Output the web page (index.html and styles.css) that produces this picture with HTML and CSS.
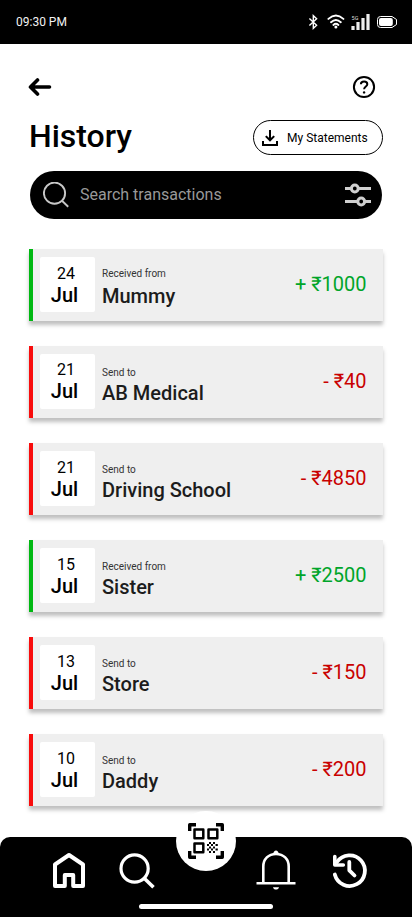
FILE: index.html
```
<!DOCTYPE html>
<html lang="en">
<head>
<meta charset="utf-8">
<meta name="viewport" content="width=device-width, initial-scale=1">
<title>History</title>
<link rel="stylesheet" href="styles.css">
</head>
<body>
<div class="screen">
  <div class="status">
    <span class="time">09:30 PM</span>
    <svg class="status-icons" width="92" height="20" viewBox="0 0 92 20" fill="none" stroke="#fff">
      <path d="M1.400 5.500 8.600 12.300 5.300 15.300V2.700L8.600 5.700 1.400 12.500" stroke-width="1.400"/>
      <path d="M20.400 5.900q7.500-6.800 15 0M23 9.200q4.900-4.600 9.800 0M25.400 11.900q2.500-2.100 5 0" stroke-width="1.900" stroke-linecap="round"/>
      <circle cx="27.900" cy="14" r="1.500" fill="#fff" stroke="none"/>
      <path d="M45 13V17M50 9V17M55 5V17M60 1V17" stroke="#eee" stroke-width="3.200"/>
      <text class="network" x="43.600" y="6.700">5G</text>
      <path d="M72.500 3.500h11.500l4.500 3v5l-4.500 3H72.500q-3 0-3-3v-5q0-3 3-3Z" stroke-width="1"/>
      <rect x="71" y="5" width="13.800" height="8" rx="2" fill="#fff" stroke="none"/>
    </svg>
  </div>
  <header class="toolbar">
    <svg width="24" height="20" viewBox="0 0 24 20" fill="none" stroke="#000" stroke-width="3.600" stroke-linecap="round" stroke-linejoin="round"><path d="M21.500 10H3M9.500 3 2.500 10l7 7"/></svg>
    <svg width="24" height="24" viewBox="0 0 24 24" fill="none" stroke="#000" stroke-width="2"><circle cx="12" cy="12" r="10.100"/><path d="M8.900 9.200c0-3.700 6.400-3.700 6.400 0 0 2.300-3.200 2.300-3.200 5.100"/><circle cx="12.100" cy="17.400" r="1.200" fill="#000" stroke="none"/></svg>
  </header>
  <div class="heading">
    <h1>History</h1>
    <button class="statements">
      <svg width="16" height="16" viewBox="0 0 16 16" fill="none" stroke="#000" stroke-width="2"><path d="M8 0v10M3.800 6.100 8 10.300l4.200-4.200M1 11v4h14v-4"/></svg>
      <span>My Statements</span>
    </button>
  </div>
  <div class="search">
    <svg width="26" height="26" viewBox="0 0 26 26" fill="none" stroke="#c8c8c8" stroke-width="1.900"><circle cx="11.500" cy="11.200" r="10.600"/><path d="m19 18.800 6.200 5.900"/></svg>
    <span class="placeholder">Search transactions</span>
    <svg width="26" height="24" viewBox="0 0 26 24" fill="none" stroke="#d0d0d0" stroke-width="3"><path d="M0 5.500h6M14 5.500h12M0 18.500h12M20 18.500h6"/><circle cx="9.800" cy="5.500" r="3.400"/><circle cx="16.200" cy="18.500" r="3.400"/></svg>
  </div>
  <main class="list">
    <article class="card received"><div class="date"><span>24</span><b>Jul</b></div><div class="party"><small>Received from</small><strong>Mummy</strong></div><span class="amount">+ ₹1000</span></article>
    <article class="card sent"><div class="date"><span>21</span><b>Jul</b></div><div class="party"><small>Send to</small><strong>AB Medical</strong></div><span class="amount">- ₹40</span></article>
    <article class="card sent"><div class="date"><span>21</span><b>Jul</b></div><div class="party"><small>Send to</small><strong>Driving School</strong></div><span class="amount">- ₹4850</span></article>
    <article class="card received"><div class="date"><span>15</span><b>Jul</b></div><div class="party"><small>Received from</small><strong>Sister</strong></div><span class="amount">+ ₹2500</span></article>
    <article class="card sent"><div class="date"><span>13</span><b>Jul</b></div><div class="party"><small>Send to</small><strong>Store</strong></div><span class="amount">- ₹150</span></article>
    <article class="card sent"><div class="date"><span>10</span><b>Jul</b></div><div class="party"><small>Send to</small><strong>Daddy</strong></div><span class="amount">- ₹200</span></article>
  </main>
  <nav class="nav">
    <svg width="40" height="40" viewBox="0 0 40 40" fill="none" stroke="#fff" stroke-width="4" stroke-linejoin="round"><path d="M6 14.500 20 5l14 9.500V36H24.200V25H15.800V36H6Z"/></svg>
    <svg width="40" height="40" viewBox="0 0 40 40" fill="none" stroke="#fff" stroke-width="3.200"><circle cx="17.600" cy="18.500" r="13.600"/><path d="m27.200 28.200 9.300 9.100" stroke-width="3.600"/></svg>
    <div class="scan">
      <svg width="36" height="36" viewBox="0 0 36 36" fill="none" stroke="#000" stroke-width="2.500" stroke-linejoin="round">
        <path d="M1.700 8V1.700H8M28 1.700h6.300V8M1.700 28v6.300H8M28 34.300h6.300V28" stroke-width="3.400"/>
        <rect x="6.500" y="6.500" width="8.800" height="8.800"/><rect x="20.500" y="6.500" width="8.800" height="8.800"/><rect x="6.500" y="20.500" width="8.800" height="8.800"/>
        <path d="M21 19h2v2h-2zM25 19h2v2h-2zM19 21h2v2h-2zM23 21h2v2h-2zM27.500 21h2.300v2h-2.300zM21 23.500h2v2h-2zM25 23.500h2v2h-2zM19 25.500h2v2h-2zM23 25.500h2v2h-2zM27.500 25.500h2.300v2h-2.300zM21 28h2v2h-2zM25 28h2v2h-2z" fill="#000" stroke="none"/>
      </svg>
    </div>
    <svg width="40" height="40" viewBox="0 0 40 40" fill="none" stroke="#fff" stroke-width="2.600"><path d="M.5 33.200h39M7.300 33V16.500C7.300 9 12.500 4 20 4s12.700 5 12.700 12.500V33"/><path d="M17.300 4c0-4.700 5.400-4.700 5.400 0ZM17 37.200h6c-.5 3.200-5.500 3.200-6 0Z" fill="#fff" stroke="none"/></svg>
    <svg width="40" height="40" viewBox="0 0 40 40" fill="none" stroke="#fff" stroke-width="3.800" stroke-linecap="round" stroke-linejoin="round"><path d="M4.800 24.500A15.300 15.300 0 1 0 7 12"/><path d="M4.800 6.500V15h8.500" stroke-width="3.600"/><path d="M19.300 12v8.300l5.200 5.200"/></svg>
    <i class="indicator"></i>
  </nav>
</div>
</body>
</html>
```
FILE: styles.css
```
* { box-sizing: border-box; }
body { margin: 0; background: #fff; color: #000; font-family: Roboto, sans-serif; }
.screen { width: 412px; height: 917px; display: flex; flex-direction: column; overflow: hidden; }
.screen svg { display: block; flex: none; }
.status { height: 44px; flex: none; background: #000; color: #f2f2f2; display: flex; align-items: center; justify-content: space-between; padding: 0 12px 0 16px; }
.time { font-size: 12px; line-height: 14px; }
.status-icons { margin-top: 2px; }
.network { font-size: 5.5px; fill: #ddd; stroke: none; }
.toolbar { height: 76px; padding: 11px 36px 1px 28px; display: flex; align-items: center; justify-content: space-between; flex: none; }
.heading { height: 35px; display: flex; align-items: center; justify-content: space-between; padding: 0 29px; flex: none; }
h1 { margin: -4px 0 0; font-size: 32px; line-height: 38px; font-weight: 500; }
.statements { width: 130px; height: 35px; border: 1px solid #000; border-radius: 18px; background: #fff; color: #000; padding: 0 0 0 8px; display: flex; align-items: center; gap: 9px; font: 400 12px/14px Roboto, sans-serif; white-space: nowrap; }
.search { height: 48px; margin: 16px 30px 0; border-radius: 24px; background: #000; display: flex; align-items: center; padding: 0 11px 0 13px; flex: none; }
.placeholder { flex: 1; margin: -2px 0 0 11px; font-size: 16px; line-height: 19px; color: #999; }
.list { display: flex; flex-direction: column; gap: 25px; margin: 30px 29px 0; flex: none; }
.card { height: 72px; background: #efefef; border-left: 4px solid; display: flex; align-items: center; padding: 0 16.5px 0 7px; box-shadow: 0 4px 4px rgba(0, 0, 0, .25); }
.received { border-color: #00b812; }
.sent { border-color: #f80c0c; }
.date { width: 55px; height: 55px; border-radius: 2px; background: #fff; display: flex; flex-direction: column; align-items: center; padding: 7px 0 0; margin-top: -1px; }
.date span { font-size: 16px; line-height: 19px; margin-right: 3px; }
.date b { font-size: 20px; line-height: 23px; font-weight: 500; margin: 1px 6px 0 0; }
.card:nth-child(2) .date { padding-top: 6px; }
.party { flex: 1; margin: 8px 0 0 7px; display: flex; flex-direction: column; color: #1c1c1c; }
.party small { font-size: 10px; line-height: 12px; color: #333; }
.party strong { font-size: 20px; line-height: 23px; font-weight: 500; margin-top: 3px; }
.card:nth-child(1) .party { margin-top: 6px; }
.card:nth-child(1) .party strong { margin-top: 5px; }
.amount { font-size: 20px; line-height: 24px; margin-top: -2px; }
.received .amount { color: #00a52a; }
.sent .amount { color: #c90000; }
.nav { position: relative; height: 80px; flex: none; margin-top: auto; background: #000; border-radius: 10px 10px 0 0; display: grid; grid-template-columns: 68px 59px 79.5px 74.5px 40px; align-items: start; padding: 13px 0 0 49px; }
.scan { width: 60px; height: 60px; border-radius: 50%; background: #fff; display: grid; place-items: center; margin-top: -39px; }
.indicator { position: absolute; left: 139px; bottom: 8px; width: 134px; height: 5px; border-radius: 3px; background: #fff; }
```
